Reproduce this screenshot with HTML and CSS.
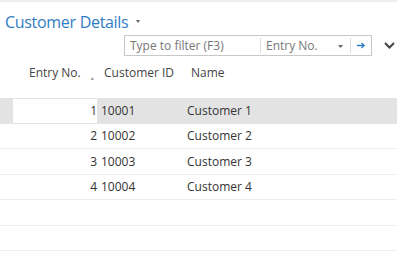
FILE: index.html
```html
<!DOCTYPE html>
<html lang="en">
<head>
    <meta charset="UTF-8">
    <title>Customer Details</title>
    <link rel="stylesheet" href="styles.css">
</head>
<body>
    <div class="topbar"></div>

    <!-- Title and filter -->
    <div class="page-head">
        <h1 class="title">Customer Details
            <svg class="title-caret" width="4" height="3" viewBox="0 0 4 3"><path d="M0 0h4L2 3z" fill="#666"/></svg>
        </h1>
        <div class="filter-line">
            <div class="filter-box">
                <span class="filter-input">Type to filter (F3)</span>
                <span class="filter-field">Entry No.
                    <svg class="field-caret" width="5" height="3" viewBox="0 0 5 3"><path d="M0 0h5L2.5 3z" fill="#666"/></svg>
                </span>
                <span class="filter-go">
                    <svg width="9" height="7" viewBox="0 0 9 7"><path d="M0 3.5h7M4.5 1l2.7 2.5-2.7 2.5" fill="none" stroke="#2f7cc4" stroke-width="1.3"/></svg>
                </span>
            </div>
            <span class="collapse">
                <svg width="11" height="7" viewBox="0 0 11 7"><path d="M1 1l4.5 4.5L10 1" fill="none" stroke="#444" stroke-width="2"/></svg>
            </span>
        </div>
    </div>

    <!-- List -->
    <div class="list">
        <div class="row head">
            <span class="mark"></span>
            <span class="col-entry">Entry No. <span class="sort">&#9650;</span></span>
            <span class="col-id">Customer ID</span>
            <span class="col-name">Name</span>
        </div>
        <div class="row selected">
            <span class="mark"></span>
            <span class="col-entry">1</span>
            <span class="col-id">10001</span>
            <span class="col-name">Customer 1</span>
        </div>
        <div class="row">
            <span class="mark"></span>
            <span class="col-entry">2</span>
            <span class="col-id">10002</span>
            <span class="col-name">Customer 2</span>
        </div>
        <div class="row">
            <span class="mark"></span>
            <span class="col-entry">3</span>
            <span class="col-id">10003</span>
            <span class="col-name">Customer 3</span>
        </div>
        <div class="row">
            <span class="mark"></span>
            <span class="col-entry">4</span>
            <span class="col-id">10004</span>
            <span class="col-name">Customer 4</span>
        </div>
        <div class="row"></div>
        <div class="row"></div>
    </div>
</body>
</html>
```

FILE: styles.css
```css
body {
    margin: 0;
    font-family: "Open Sans", "Noto Sans", sans-serif;
    font-size: 12px;
    color: #333;
    background: #fff;
}
.topbar {
    height: 2px;
    background: #eeeeee;
}
.page-head {
    padding: 8px 0 0 5px;
}
.title {
    margin: 0;
    font-size: 16px;
    letter-spacing: -0.3px;
    font-weight: normal;
    color: #2f7cc4;
    line-height: 24px;
}
.title-caret {
    margin-left: 4px;
    vertical-align: 5px;
}
.filter-line {
    display: flex;
    align-items: center;
    margin-top: 1px;
    padding-left: 119px;
}
.filter-box {
    display: flex;
    align-items: center;
    width: 248px;
    height: 21px;
    box-sizing: border-box;
    border: 1px solid #c8c8c8;
    color: #777;
}
.filter-input {
    width: 130px;
    padding-left: 5px;
    border-right: 1px solid #ddd;
    line-height: 15px;
}
.filter-field {
    width: 90px;
    padding-left: 5px;
    box-sizing: border-box;
    border-right: 1px solid #ddd;
    line-height: 15px;
    position: relative;
}
.field-caret {
    position: absolute;
    right: 7px;
    top: 7px;
}
.filter-go {
    flex: 1;
    display: flex;
    justify-content: center;
}
.collapse {
    margin-left: 12px;
    display: flex;
}
.list {
    margin-top: 5px;
}
.row {
    display: flex;
    align-items: center;
    height: 25.5px;
    box-sizing: border-box;
    border-bottom: 1px solid #eeeeee;
}
.row.head {
    height: 37px;
    border-bottom: none;
    color: #444;
    padding-bottom: 14px;
}
.mark {
    width: 13px;
    align-self: stretch;
}
.col-entry {
    width: 84px;
    text-align: right;
    align-self: stretch;
    display: flex;
    align-items: center;
    justify-content: flex-end;
}
.head .col-entry {
    justify-content: flex-start;
    padding-left: 16px;
    box-sizing: border-box;
}
.sort {
    font-size: 5px;
    color: #999;
    margin-left: 9px;
    margin-top: 10px;
}
.col-id {
    width: 86px;
    padding-left: 4px;
}
.head .col-id {
    padding-left: 7px;
}
.col-name {
    flex: 1;
}
.head .col-name {
    padding-left: 1px;
}
.row.selected {
    background: #e3e3e3;
    border-bottom-color: #e3e3e3;
}
.selected .col-entry {
    background: #fff;
    border-top: 1px solid #e3e3e3;
}
```
